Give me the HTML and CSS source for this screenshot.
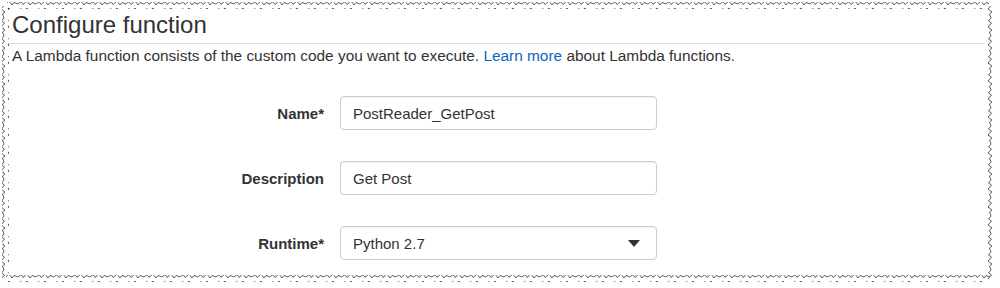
FILE: index.html
```html
<!DOCTYPE html>
<html lang="en">
<head>
  <meta charset="UTF-8" />
  <title>Configure function</title>
  <link rel="stylesheet" href="styles.css">
</head>
<body>

<!-- torn paper edge around the capture -->
<svg class="torn-edge" width="1000" height="288" viewBox="0 0 1000 288">
  <defs>
    <pattern id="edge-h" width="18" height="7" patternUnits="userSpaceOnUse">
      <polyline points="0,4 3,1.5 5,4.5 9,1 12,5 14,2.5 18,4" fill="none" stroke="currentColor" stroke-width="0.8"/>
    </pattern>
    <pattern id="edge-v" width="7" height="18" patternUnits="userSpaceOnUse">
      <polyline points="4,0 1.5,3 4.5,5 1,9 5,12 2.5,14 4,18" fill="none" stroke="currentColor" stroke-width="0.8"/>
    </pattern>
  </defs>
  <rect class="edge-light" x="7" y="2" width="982" height="7" fill="url(#edge-h)"/>
  <rect class="edge-light" x="2" y="6" width="7" height="272" fill="url(#edge-v)"/>
  <rect class="edge-dark" x="985" y="6" width="7" height="273" fill="url(#edge-v)"/>
  <rect class="edge-dark" x="6" y="275" width="984" height="7" fill="url(#edge-h)"/>
</svg>

<div class="frame">
  <h2 class="title">Configure function</h2>
  <p class="intro">A Lambda function consists of the custom code you want to execute. <a href="#">Learn more</a> about Lambda functions.</p>

  <div class="form">
    <label>Name*</label>
    <div class="field">PostReader_GetPost</div>

    <label>Description</label>
    <div class="field">Get Post</div>

    <label>Runtime*</label>
    <div class="field select">
      <span>Python 2.7</span>
      <span class="caret"></span>
    </div>
  </div>
</div>

</body>
</html>
```

FILE: styles.css
```css
* {
  margin: 0;
  padding: 0;
  box-sizing: border-box;
}
html, body {
  height: 100%;
  overflow: hidden;
}
body {
  background: #fff;
  font-family: 'Liberation Sans', Arial, sans-serif;
  color: #333;
}

/* torn edge */
.torn-edge {
  position: absolute;
  top: 0;
  left: 0;
  pointer-events: none;
}
.edge-light {
  color: #c4c4c4;
}
.edge-dark {
  color: #7c7c7c;
}

.frame {
  padding: 12px 15px 0 8px;
}

.title {
  width: 977px;
  font-size: 24px;
  line-height: 26px;
  font-weight: normal;
  padding: 0 0 5px 4px;
  border-bottom: 1px solid #ddd;
}

.intro {
  margin: 2px 0 0 4px;
  font-size: 15.4px;
  line-height: 20px;
}
.intro a {
  color: #0a66c2;
  text-decoration: none;
}

.form {
  display: grid;
  grid-template-columns: 316px 317px;
  column-gap: 16px;
  row-gap: 31px;
  margin-top: 30px;
}
.form label {
  align-self: center;
  text-align: right;
  font-size: 15px;
  font-weight: bold;
}

.field {
  display: flex;
  align-items: center;
  height: 34px;
  padding: 0 12px;
  border: 1px solid #ccc;
  border-radius: 4px;
  background: #fff;
  box-shadow: inset 0 1px 1px rgba(0, 0, 0, 0.06);
  font-size: 15px;
}
.select {
  justify-content: space-between;
}
.caret {
  width: 0;
  height: 0;
  margin-right: 4px;
  border-left: 6px solid transparent;
  border-right: 6px solid transparent;
  border-top: 7px solid #333;
}
```
